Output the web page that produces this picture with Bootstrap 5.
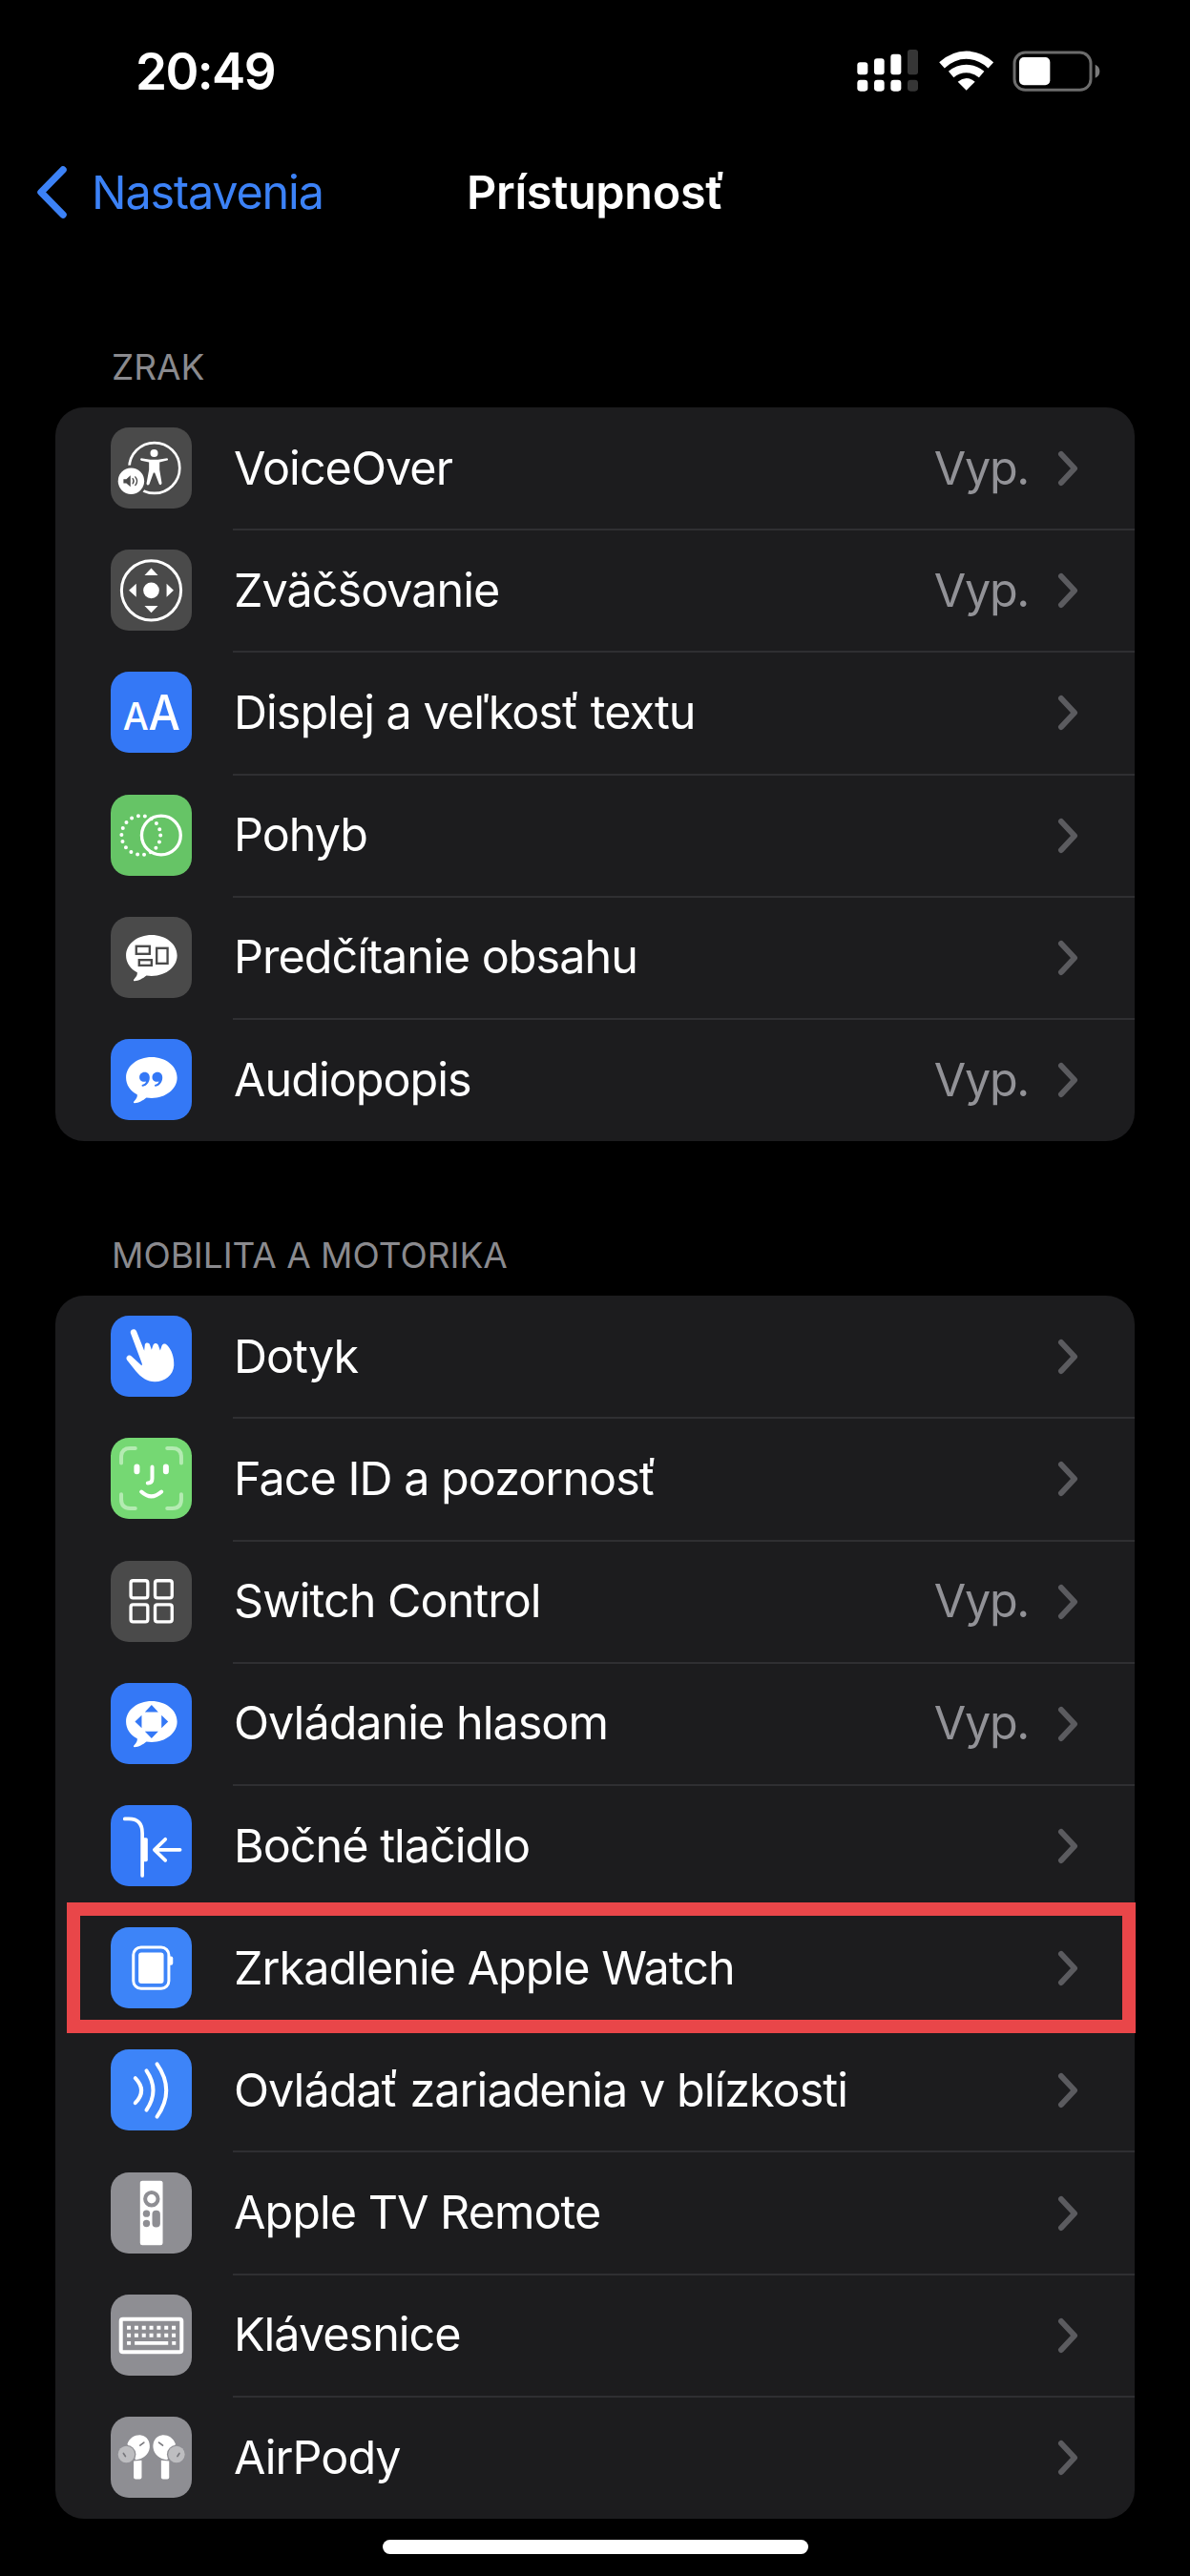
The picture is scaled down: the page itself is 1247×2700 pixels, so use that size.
<!DOCTYPE html>
<html lang="sk" data-bs-theme="dark">
<head>
<meta charset="utf-8">
<meta name="viewport" content="width=device-width, initial-scale=1">
<title>Prístupnosť</title>
<link rel="stylesheet" href="https://cdn.jsdelivr.net/npm/bootstrap@5.3.0/dist/css/bootstrap.min.css">
<style>
  body{background:#000;color:#fff;font-family:Inter,"Liberation Sans",sans-serif;overflow-x:hidden}
  svg{display:block;flex:none}
  .screen{width:1247px;height:2700px;overflow:hidden}
  .status-bar{height:146px;padding:2px 94px 0 142px}
  .clock{font-size:53px;font-weight:600;letter-spacing:-1.6px;line-height:64px;padding-top:2px}
  .title-bar{height:112px;padding-left:37px}
  .back-link{color:#3c82f7;font-size:48.5px;letter-spacing:-1.15px;gap:24px;text-decoration:none}
  .back-link svg{margin-top:-2px}
  .page-title{font-size:48.5px;font-weight:600;letter-spacing:-.3px;margin:0;left:489px;top:0;height:112px}
  .group-label{color:#8a8a8e;font-size:37px;letter-spacing:-.02px;line-height:46px;padding-left:117px;margin-bottom:19px}
  .label-first{margin-top:104px}
  .label-next{margin-top:97px}
  .settings{background:#1c1c1e;border-radius:30px;margin:0 58px}
  .setting{height:128.2px;background:none;border:0;padding:0 0 0 58px;color:#fff;font-size:48.5px;letter-spacing:-.98px;white-space:nowrap}
  .tile{width:85px;height:85px;border-radius:19px;margin:0 43px 1px 0;flex:none}
  .setting-body{border-bottom:2px solid #2f2f32;margin-bottom:-2px;padding:0 59px 0 1px}
  .setting:last-child .setting-body,.no-rule .setting-body{border-color:transparent}
  .value-text{color:#929297;margin-right:30px;letter-spacing:-1.3px}
  .t-gray{background:#4a4a4a}.t-blue{background:#3478f6}.t-sky{background:#3d84f8}
  .t-green{background:#66c466}.t-lime{background:#75d873}.t-silver{background:#8e8e93}
  .marker{top:-5px;left:12px;right:-1px;bottom:-4px;border:14px solid #e94649;pointer-events:none}
  .home-bar{width:446px;height:15px;border-radius:8px;background:#fff;margin:22px auto 0}
</style>
</head>
<body>
<svg width="0" height="0" class="position-absolute">
  <defs>
    <symbol id="chev" viewBox="0 0 22 38"><path d="M4 4 L18 19 L4 34" fill="none" stroke="#5b5b5f" stroke-width="6" stroke-linecap="round" stroke-linejoin="round"/></symbol>
    <symbol id="bubble" viewBox="0 0 254 254"><path d="M128 57C172 57 208 85 208 121C208 157 172 185 128 185C122 185 117 185 112 184C101 193 87 201 75 201C70 201 71 197 74 194C81 187 84 181 83 174C61 163 48 143 48 121C48 85 84 57 128 57Z" fill="#fff"/></symbol>
  </defs>
</svg>
<main class="screen d-flex flex-column">
  <header class="status-bar d-flex align-items-center justify-content-between">
    <div class="clock">20:49</div>
    <div class="d-flex align-items-center">
      <svg width="65" height="44" viewBox="0 0 195 132">
        <g fill="#fff"><rect x="1" y="40" width="33" height="39" rx="9"/><rect x="54" y="28" width="32" height="51" rx="9"/><rect x="106" y="14" width="33" height="65" rx="9"/><rect x="1" y="95" width="33" height="36" rx="10"/><rect x="54" y="95" width="32" height="36" rx="10"/><rect x="106" y="95" width="33" height="36" rx="10"/></g>
        <g fill="#363636"><rect x="159" y="0" width="33" height="79" rx="9"/><rect x="159" y="95" width="33" height="36" rx="10"/></g>
      </svg>
      <svg width="57" height="42" viewBox="0 0 171 126" style="margin-left:21px">
        <g fill="none" stroke="#fff" stroke-width="25"><path d="M9 46Q44 14 86 14Q128 14 163 46"/><path d="M38 75Q59 57 86 57Q113 57 134 75"/></g>
        <path d="M59 98Q86 76 113 98L86 125Z" fill="#fff"/>
      </svg>
      <svg width="92" height="43" viewBox="0 0 276 129" style="margin-left:20px">
        <rect x="6" y="6" width="240" height="118" rx="34" fill="none" stroke="#6c6c6c" stroke-width="9"/>
        <rect x="21" y="21" width="97" height="88" rx="15" fill="#fff"/><path d="M260 44Q274 50 274 65Q274 80 260 86Z" fill="#7a7a7a"/>
      </svg>
    </div>
  </header>
  <nav class="title-bar position-relative d-flex align-items-center">
    <a class="back-link d-flex align-items-center" href="#"><svg width="35" height="57" viewBox="0 0 35 57"><path d="M29 5L6 28.5L29 52" fill="none" stroke="#3c82f7" stroke-width="7.5" stroke-linecap="round" stroke-linejoin="round"/></svg><span>Nastavenia</span></a>
    <h1 class="page-title position-absolute d-flex align-items-center">Prístupnosť</h1>
  </nav>

  <div class="group-label label-first">ZRAK</div>
  <div class="list-group settings">
    <div class="list-group-item setting d-flex align-items-center">
      <svg class="tile t-gray" viewBox="0 0 254 254"><circle cx="137" cy="127" r="79" fill="none" stroke="#fff" stroke-width="8"/><circle cx="64" cy="168" r="50" fill="#4a4a4a"/><circle cx="64" cy="168" r="41" fill="#fff"/><circle cx="136" cy="81" r="12" fill="#fff"/><path d="M95 96L124 101H148L177 96Q182 101 177 103L153 109V132L160 175Q157 184 152 178L138 142H134L121 178Q115 184 112 176L120 132V109L95 104Q90 100 95 96Z" fill="#fff"/><path d="M40 162H49L62 150V186L49 175H40Z" fill="#4a4a4a"/><path d="M69 160Q75 168 69 176M77 155Q88 168 77 181" fill="none" stroke="#4a4a4a" stroke-width="4" stroke-linecap="round"/></svg>
      <div class="setting-body d-flex flex-fill align-items-center h-100"><span class="me-auto">VoiceOver</span><span class="value-text">Vyp.</span><svg width="22" height="38"><use href="#chev"/></svg></div>
    </div>
    <div class="list-group-item setting d-flex align-items-center">
      <svg class="tile t-gray" viewBox="0 0 254 254"><circle cx="127" cy="128" r="93" fill="none" stroke="#fff" stroke-width="9"/><circle cx="127" cy="128" r="25" fill="#fff"/><path d="M127 58L148 81H106ZM127 198L148 176H106ZM57 128L80 107V149ZM197 128L175 107V149Z" fill="#fff"/></svg>
      <div class="setting-body d-flex flex-fill align-items-center h-100"><span class="me-auto">Zväčšovanie</span><span class="value-text">Vyp.</span><svg width="22" height="38"><use href="#chev"/></svg></div>
    </div>
    <div class="list-group-item setting d-flex align-items-center">
      <svg class="tile t-blue" viewBox="0 0 254 254"><g fill="#fff" font-family="Inter" font-weight="500"><text x="38" y="181" font-size="118" textLength="80" lengthAdjust="spacingAndGlyphs">A</text><text x="118" y="181" font-size="150" textLength="99" lengthAdjust="spacingAndGlyphs">A</text></g></svg>
      <div class="setting-body d-flex flex-fill align-items-center h-100"><span class="me-auto">Displej a veľkosť textu</span><svg width="22" height="38"><use href="#chev"/></svg></div>
    </div>
    <div class="list-group-item setting d-flex align-items-center">
      <svg class="tile t-green" viewBox="0 0 254 254"><g fill="none" stroke="#fff"><circle cx="158" cy="127" r="61" stroke-width="10"/><circle cx="95" cy="127" r="61" stroke-width="12" stroke-linecap="round" stroke-dasharray="0 21.293"/></g></svg>
      <div class="setting-body d-flex flex-fill align-items-center h-100"><span class="me-auto">Pohyb</span><svg width="22" height="38"><use href="#chev"/></svg></div>
    </div>
    <div class="list-group-item setting d-flex align-items-center">
      <svg class="tile t-gray" viewBox="0 0 254 254"><use href="#bubble"/><g fill="none" stroke="#4a4a4a" stroke-width="7"><rect x="80" y="92" width="42" height="24"/><rect x="89" y="135" width="39" height="17"/><rect x="144" y="98" width="34" height="48"/></g></svg>
      <div class="setting-body d-flex flex-fill align-items-center h-100"><span class="me-auto">Predčítanie obsahu</span><svg width="22" height="38"><use href="#chev"/></svg></div>
    </div>
    <div class="list-group-item setting d-flex align-items-center">
      <svg class="tile t-blue" viewBox="0 0 254 254"><use href="#bubble"/><path d="M106 104C117 104 122 112 122 121C122 135 113 146 101 149C96 149 96 144 100 143C106 141 110 137 111 133C98 137 90 129 90 120C90 111 97 104 106 104ZM146 104C157 104 162 112 162 121C162 135 153 146 141 149C136 149 136 144 140 143C146 141 150 137 151 133C138 137 130 129 130 120C130 111 137 104 146 104Z" fill="#3478f6"/></svg>
      <div class="setting-body d-flex flex-fill align-items-center h-100"><span class="me-auto">Audiopopis</span><span class="value-text">Vyp.</span><svg width="22" height="38"><use href="#chev"/></svg></div>
    </div>
  </div>

  <div class="group-label label-next">MOBILITA A MOTORIKA</div>
  <div class="list-group settings">
    <div class="list-group-item setting d-flex align-items-center">
      <svg class="tile t-blue" viewBox="0 0 254 254"><path d="M62 54C60 43 76 38 81 49L105 110L107 91C109 83 121 84 123 92L128 107L133 92C137 84 147 86 149 93L155 109L160 94C164 86 173 87 177 93C191 108 199 130 198 156C196 186 170 207 138 207C115 207 95 193 79 174L51 139C45 129 57 119 65 127L95 155Q99 158 98 150Z" fill="#fff"/></svg>
      <div class="setting-body d-flex flex-fill align-items-center h-100"><span class="me-auto">Dotyk</span><svg width="22" height="38"><use href="#chev"/></svg></div>
    </div>
    <div class="list-group-item setting d-flex align-items-center">
      <svg class="tile t-lime" viewBox="0 0 254 254"><g fill="none" stroke-linecap="round"><path d="M33 79V61Q33 33 61 33H77M177 33H193Q221 33 221 61V79M221 177V193Q221 221 193 221H177M77 221H61Q33 221 33 193V177" stroke="#b4ebb2" stroke-width="12"/><path d="M82 91V105M173 91V105" stroke="#fff" stroke-width="18"/><path d="M130 91V128Q130 142 116 142M96 169Q127 198 159 169" stroke="#fff" stroke-width="12"/></g></svg>
      <div class="setting-body d-flex flex-fill align-items-center h-100"><span class="me-auto">Face ID a pozornosť</span><svg width="22" height="38"><use href="#chev"/></svg></div>
    </div>
    <div class="list-group-item setting d-flex align-items-center">
      <svg class="tile t-gray" viewBox="0 0 254 254"><g fill="none" stroke="#fff" stroke-width="10"><rect x="63" y="62" width="53" height="54" rx="7"/><rect x="139" y="62" width="53" height="54" rx="7"/><rect x="63" y="137" width="53" height="54" rx="7"/><rect x="139" y="137" width="53" height="54" rx="7"/></g></svg>
      <div class="setting-body d-flex flex-fill align-items-center h-100"><span class="me-auto">Switch Control</span><span class="value-text">Vyp.</span><svg width="22" height="38"><use href="#chev"/></svg></div>
    </div>
    <div class="list-group-item setting d-flex align-items-center">
      <svg class="tile t-blue" viewBox="0 0 254 254"><use href="#bubble"/><path d="M128 69L149 91H107ZM128 173L149 152H107ZM76 121L97 101V141ZM180 121L159 101V141Z" fill="#3478f6"/></svg>
      <div class="setting-body d-flex flex-fill align-items-center h-100"><span class="me-auto">Ovládanie hlasom</span><span class="value-text">Vyp.</span><svg width="22" height="38"><use href="#chev"/></svg></div>
    </div>
    <div class="list-group-item setting no-rule d-flex align-items-center">
      <svg class="tile t-blue" viewBox="0 0 254 254"><g fill="none" stroke="#fff" stroke-width="11" stroke-linecap="round" stroke-linejoin="round"><path d="M44 43H57Q99 43 99 88V221"/><path d="M217 140H138M171 107L137 140L171 173"/></g><path d="M99 102H111Q116 102 116 107V172Q116 177 111 177H99Z" fill="#fff"/></svg>
      <div class="setting-body d-flex flex-fill align-items-center h-100"><span class="me-auto">Bočné tlačidlo</span><svg width="22" height="38"><use href="#chev"/></svg></div>
    </div>
    <div class="list-group-item setting no-rule position-relative d-flex align-items-center">
      <svg class="tile t-sky" viewBox="0 0 254 254"><rect x="71" y="63" width="111" height="129" rx="24" fill="none" stroke="#fff" stroke-width="9"/><rect x="87" y="79" width="79" height="97" rx="9" fill="#fff"/><path d="M183 91H189Q195 91 195 97V113Q195 119 189 119H183Z" fill="#fff"/></svg>
      <div class="setting-body d-flex flex-fill align-items-center h-100"><span class="me-auto">Zrkadlenie Apple Watch</span><svg width="22" height="38"><use href="#chev"/></svg></div>
      <div class="marker position-absolute"></div>
    </div>
    <div class="list-group-item setting d-flex align-items-center">
      <svg class="tile t-sky" viewBox="0 0 254 254"><path d="M77 90Q115 129 77 168M112 67Q154 129 112 190M145 46Q203 129 145 211" fill="none" stroke="#fff" stroke-width="12" stroke-linecap="round"/></svg>
      <div class="setting-body d-flex flex-fill align-items-center h-100"><span class="me-auto">Ovládať zariadenia v blízkosti</span><svg width="22" height="38"><use href="#chev"/></svg></div>
    </div>
    <div class="list-group-item setting d-flex align-items-center">
      <svg class="tile t-silver" viewBox="0 0 254 254"><rect x="92" y="26" width="71" height="202" rx="7" fill="#fff"/><circle cx="128" cy="83" r="20" fill="none" stroke="#8e8e93" stroke-width="12"/><g fill="#8e8e93"><circle cx="112" cy="129" r="11"/><circle cx="112" cy="160" r="11"/><rect x="130" y="119" width="25" height="53" rx="12"/></g></svg>
      <div class="setting-body d-flex flex-fill align-items-center h-100"><span class="me-auto">Apple TV Remote</span><svg width="22" height="38"><use href="#chev"/></svg></div>
    </div>
    <div class="list-group-item setting d-flex align-items-center">
      <svg class="tile t-silver" viewBox="0 0 254 254"><g fill="none" stroke="#fff"><rect x="32" y="77" width="190" height="103" rx="6" stroke-width="12"/><path d="M51 104H204M51 128H204" stroke-width="12" stroke-dasharray="12 11.4"/><path d="M51 152H63M75 152H180M192 152H204" stroke-width="11"/></g></svg>
      <div class="setting-body d-flex flex-fill align-items-center h-100"><span class="me-auto">Klávesnice</span><svg width="22" height="38"><use href="#chev"/></svg></div>
    </div>
    <div class="list-group-item setting d-flex align-items-center">
      <svg class="tile t-silver" viewBox="0 0 254 254"><g id="pod"><path d="M52 86C59 65 78 56 95 58C114 60 124 78 122 97C119 119 102 133 78 135Z" fill="#fff"/><path d="M72 139L97 137V190Q97 196 91 196H78Q72 196 72 190Z" fill="#fff"/><circle cx="50" cy="118" r="29" fill="#8e8e93"/><circle cx="49" cy="118" r="26" fill="#bdbdc0"/><path d="M92 90L104 81M40 115L46 124" stroke="#77777c" stroke-width="5" stroke-linecap="round"/></g><use href="#pod" transform="translate(255 0) scale(-1 1)"/></svg>
      <div class="setting-body d-flex flex-fill align-items-center h-100"><span class="me-auto">AirPody</span><svg width="22" height="38"><use href="#chev"/></svg></div>
    </div>
  </div>
  <div class="home-bar"></div>
</main>
<script src="https://cdn.jsdelivr.net/npm/bootstrap@5.3.0/dist/js/bootstrap.bundle.min.js"></script>
</body>
</html>
